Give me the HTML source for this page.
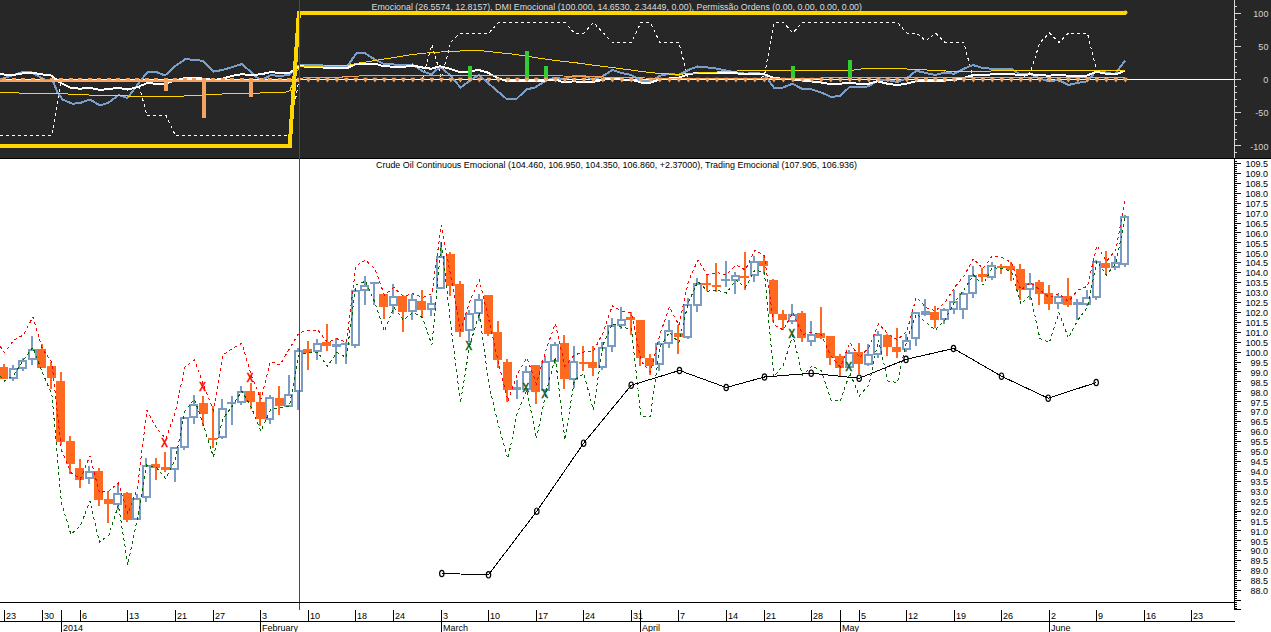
<!DOCTYPE html>
<html><head><meta charset="utf-8"><title>Chart</title>
<style>html,body{margin:0;padding:0;background:#fff;overflow:hidden}svg{display:block}text{font-family:"Liberation Sans",sans-serif}</style></head><body>
<svg width="1271" height="632" viewBox="0 0 1271 632" shape-rendering="crispEdges">
<rect x="0" y="0" width="1271" height="632" fill="#fff"/>
<rect x="0" y="0" width="1271" height="158" fill="#272727"/>
<rect x="0" y="158" width="1271" height="1" fill="#000"/>
<rect x="0" y="79" width="1234" height="1" fill="#fff"/>
<polyline fill="none" stroke="#fff" stroke-width="1" stroke-dasharray="3,3" points="0.00,135.50 4.40,135.50 13.90,135.50 23.40,135.50 32.90,135.50 42.40,135.50 51.90,135.50 61.40,79.50 70.90,79.50 80.40,79.50 89.90,79.50 99.40,79.50 108.90,79.50 118.40,79.50 127.90,79.50 137.40,79.50 146.90,115.00 156.40,115.00 165.90,115.00 175.40,135.50 184.90,135.50 194.40,135.50 203.90,135.50 213.40,135.50 222.90,135.50 232.40,135.50 241.90,135.50 251.40,135.50 260.90,135.50 270.40,135.50 279.90,135.50 289.40,135.50 298.90,79.50 308.40,79.50 317.90,79.50 327.40,79.50 336.90,79.50 346.40,79.50 355.90,79.50 365.40,79.50 374.90,79.50 384.40,79.50 393.90,79.50 403.40,79.50 412.90,79.50 422.40,79.50 431.90,44.50 441.40,78.00 450.90,42.00 460.40,33.00 469.90,33.00 479.40,33.00 488.90,33.00 498.40,22.50 507.90,22.50 517.40,22.50 526.90,22.50 536.40,22.50 545.90,22.50 555.40,22.50 564.90,22.50 574.40,33.00 583.90,33.00 593.40,22.50 602.90,32.50 612.40,42.50 621.90,42.50 631.40,42.50 640.90,22.50 650.40,22.50 659.90,42.50 669.40,42.50 678.90,42.50 688.40,79.50 697.90,79.50 707.40,79.50 716.90,79.50 726.40,79.50 735.90,79.50 745.40,79.50 754.90,79.50 764.40,76.00 773.90,22.50 783.40,22.50 792.90,33.00 802.40,22.50 811.90,22.50 821.40,22.50 830.90,22.50 840.40,22.50 849.90,22.50 859.40,22.50 868.90,22.50 878.40,22.50 887.90,22.50 897.40,22.50 906.90,33.00 916.40,33.00 925.90,41.00 935.40,33.00 944.90,42.50 954.40,42.50 963.90,42.50 973.40,79.50 982.90,79.50 992.40,79.50 1001.90,79.50 1011.40,79.50 1020.90,79.50 1030.40,72.00 1039.90,42.50 1049.40,33.00 1058.90,42.50 1068.40,33.00 1077.90,33.00 1087.40,33.00 1096.90,72.00 1106.40,73.50 1115.90,74.50 1125.40,71.50"/>
<polyline fill="none" stroke="#7A9FCC" stroke-width="2" points="0.00,79.50 10.00,76.25 22.50,72.00 31.25,72.50 40.00,77.00 46.25,80.00 52.50,80.00 57.50,92.50 62.50,99.50 72.50,103.75 80.00,103.00 90.00,99.50 100.00,105.50 108.75,102.50 118.75,95.00 127.50,98.00 136.25,86.25 147.50,72.00 156.25,72.00 165.00,75.50 175.00,66.25 185.50,59.00 193.75,60.00 203.00,60.75 213.75,71.50 222.50,70.00 232.50,67.00 242.00,64.00 250.00,71.25 257.50,78.00 262.50,79.50 271.25,75.00 280.00,76.25 290.00,74.50 296.25,66.25 299.50,65.50 306.25,65.00 347.50,66.25 356.25,53.25 365.00,53.25 375.00,59.50 383.75,63.75 393.75,64.50 402.50,65.50 412.50,64.50 422.50,71.25 431.25,74.25 440.00,67.00 450.00,75.00 460.50,87.50 470.00,80.50 478.75,75.00 487.50,82.50 497.50,91.25 507.00,99.25 516.25,99.25 526.25,89.50 535.00,87.50 545.00,81.25 555.00,77.50 563.75,79.50 573.75,75.75 583.75,75.75 592.50,79.50 602.50,76.25 612.50,70.00 621.25,73.00 631.25,75.00 641.25,81.25 650.50,81.25 660.00,75.75 669.25,73.75 678.75,75.00 688.25,70.00 697.50,66.50 707.50,67.50 717.50,68.75 727.50,70.75 736.25,72.50 746.25,73.75 755.00,72.50 764.50,74.50 773.75,87.50 783.00,87.50 792.50,83.75 802.00,88.75 811.25,89.25 821.25,92.50 830.75,96.75 840.00,96.25 849.50,87.00 858.75,87.50 868.75,86.25 877.50,80.50 887.50,80.00 897.00,82.00 906.25,78.75 916.25,70.75 925.75,73.00 935.00,75.00 944.50,72.50 954.25,73.75 963.75,68.75 973.00,65.00 982.50,68.00 992.50,68.75 1001.75,69.25 1011.25,68.75 1020.00,74.50 1030.00,73.75 1040.00,78.75 1049.25,81.25 1058.75,80.00 1068.25,85.00 1077.50,83.00 1087.00,81.25 1096.50,70.75 1106.25,72.50 1115.00,74.25 1125.00,60.75"/>
<polyline fill="none" stroke="#fff" stroke-width="2" points="0.00,73.75 10.00,75.50 20.00,73.75 31.25,72.50 41.25,74.25 51.25,75.50 60.00,82.50 70.00,87.50 80.00,88.75 88.75,87.50 100.00,90.00 110.00,88.75 118.75,88.00 127.50,89.50 136.25,87.50 147.50,83.00 156.25,83.75 165.00,83.75 175.00,80.50 185.00,78.00 195.00,77.50 203.75,78.75 213.75,80.00 222.50,78.75 232.50,75.75 242.00,74.25 251.25,75.00 261.25,74.25 271.25,72.00 280.00,73.25 290.00,72.50 297.50,67.50 299.50,66.25 322.50,67.50 347.50,68.00 356.25,63.75 375.00,63.75 383.75,66.25 402.50,67.00 412.50,65.50 422.50,67.50 431.25,68.75 440.00,66.25 450.00,68.75 460.50,72.50 470.00,71.25 478.75,70.00 487.50,72.50 497.50,78.00 507.00,81.25 526.25,81.25 545.00,80.50 555.00,79.50 563.75,82.50 573.75,81.25 583.75,82.50 592.50,82.00 602.50,80.00 612.50,78.00 621.25,79.50 631.25,79.50 641.25,82.50 650.50,82.50 660.00,79.50 678.75,77.50 688.25,74.50 697.50,72.50 717.50,72.50 736.25,73.25 746.25,74.50 755.00,74.25 764.50,74.25 773.75,78.00 792.50,79.50 802.00,80.50 821.25,82.50 830.75,84.25 849.50,83.00 858.75,83.75 868.75,83.75 877.50,81.25 887.50,83.75 897.00,85.00 906.25,83.75 916.25,81.25 935.00,81.25 954.25,80.00 963.75,78.00 973.00,75.00 982.50,75.50 992.50,74.25 1001.75,73.75 1011.25,73.75 1020.00,75.50 1030.00,74.25 1040.00,75.00 1049.25,75.75 1058.75,74.50 1068.25,75.75 1077.50,76.25 1087.00,75.50 1096.50,71.75 1106.25,73.75 1115.00,74.50 1124.00,71.25"/>
<polyline fill="none" stroke="#FFD700" stroke-width="1" points="0.00,92.50 37.50,93.50 57.50,93.50 77.50,94.50 100.00,95.50 118.75,95.50 137.50,96.50 156.25,96.50 175.00,96.50 193.75,95.50 212.50,94.50 231.25,93.50 250.00,93.50 270.00,92.50 285.00,92.50 290.00,90.50 296.25,72.50 300.00,66.50 347.50,65.50 356.25,63.50 375.00,60.50 393.75,57.50 412.50,54.50 431.25,52.50 450.00,51.50 470.00,50.50 480.00,50.50 497.50,52.50 516.25,54.50 535.00,57.50 555.00,60.50 573.75,62.50 596.00,65.50 612.50,67.50 641.25,71.50 660.00,73.50 678.75,74.50 688.25,73.50 707.50,72.50 727.50,71.50 746.25,70.50 765.00,70.50 792.50,70.50 830.00,70.50 850.00,70.50 865.00,68.50 896.00,68.50 917.50,69.50 955.00,71.50 990.00,71.50 992.50,70.50 1125.00,70.50"/>
<rect x="0" y="80" width="299" height="2" fill="#F4A460"/>
<polyline fill="none" stroke="#F4A460" stroke-width="1" points="299.50,79.50 304.00,77.50 342.00,77.50 343.00,76.50 375.00,75.50 530.00,75.50 596.00,76.50 610.00,77.50 680.00,78.50 820.00,78.50 822.50,77.50 1125.00,77.50"/>
<rect x="164.0" y="80" width="4" height="11.0" fill="#F4A460"/>
<rect x="202.0" y="80" width="4" height="38.0" fill="#F4A460"/>
<rect x="249.0" y="80" width="4" height="17.0" fill="#F4A460"/>
<rect x="468.0" y="66.0" width="4" height="14.0" fill="#32CD32"/>
<rect x="525.0" y="51.0" width="4" height="29.0" fill="#32CD32"/>
<rect x="544.0" y="66.0" width="4" height="14.0" fill="#32CD32"/>
<rect x="791.0" y="65.5" width="4" height="14.5" fill="#32CD32"/>
<rect x="848.0" y="59.5" width="4" height="20.5" fill="#32CD32"/>
<rect x="2" y="78" width="4" height="3" fill="#F4A460"/>
<rect x="12" y="78" width="4" height="3" fill="#F4A460"/>
<rect x="21" y="78" width="4" height="3" fill="#F4A460"/>
<rect x="31" y="78" width="4" height="3" fill="#F4A460"/>
<rect x="40" y="78" width="4" height="3" fill="#F4A460"/>
<rect x="50" y="78" width="4" height="3" fill="#F4A460"/>
<rect x="59" y="78" width="4" height="3" fill="#F4A460"/>
<rect x="69" y="78" width="4" height="3" fill="#F4A460"/>
<rect x="78" y="78" width="4" height="3" fill="#F4A460"/>
<rect x="88" y="78" width="4" height="3" fill="#F4A460"/>
<rect x="97" y="78" width="4" height="3" fill="#F4A460"/>
<rect x="107" y="78" width="4" height="3" fill="#F4A460"/>
<rect x="116" y="78" width="4" height="3" fill="#F4A460"/>
<rect x="126" y="78" width="4" height="3" fill="#F4A460"/>
<rect x="135" y="78" width="4" height="3" fill="#F4A460"/>
<rect x="145" y="78" width="4" height="3" fill="#F4A460"/>
<rect x="154" y="78" width="4" height="3" fill="#F4A460"/>
<rect x="164" y="78" width="4" height="3" fill="#F4A460"/>
<rect x="173" y="78" width="4" height="3" fill="#F4A460"/>
<rect x="183" y="78" width="4" height="3" fill="#F4A460"/>
<rect x="192" y="78" width="4" height="3" fill="#F4A460"/>
<rect x="202" y="78" width="4" height="3" fill="#F4A460"/>
<rect x="211" y="78" width="4" height="3" fill="#F4A460"/>
<rect x="221" y="78" width="4" height="3" fill="#F4A460"/>
<rect x="230" y="78" width="4" height="3" fill="#F4A460"/>
<rect x="240" y="78" width="4" height="3" fill="#F4A460"/>
<rect x="249" y="78" width="4" height="3" fill="#F4A460"/>
<rect x="259" y="78" width="4" height="3" fill="#F4A460"/>
<rect x="268" y="78" width="4" height="3" fill="#F4A460"/>
<rect x="278" y="78" width="4" height="3" fill="#F4A460"/>
<rect x="287" y="78" width="4" height="3" fill="#F4A460"/>
<polygon points="296.8,77.8 301.0,77.8 300.6,80 298.9,82.6 297.2,80" fill="#F4A460" shape-rendering="auto"/>
<polygon points="306.3,77.8 310.5,77.8 310.1,80 308.4,82.6 306.7,80" fill="#F4A460" shape-rendering="auto"/>
<polygon points="315.8,77.8 320.0,77.8 319.6,80 317.9,82.6 316.2,80" fill="#F4A460" shape-rendering="auto"/>
<polygon points="325.3,77.8 329.5,77.8 329.1,80 327.4,82.6 325.7,80" fill="#F4A460" shape-rendering="auto"/>
<polygon points="334.8,77.8 339.0,77.8 338.6,80 336.9,82.6 335.2,80" fill="#F4A460" shape-rendering="auto"/>
<polygon points="344.3,77.8 348.5,77.8 348.1,80 346.4,82.6 344.7,80" fill="#F4A460" shape-rendering="auto"/>
<polygon points="353.8,77.8 358.0,77.8 357.6,80 355.9,82.6 354.2,80" fill="#F4A460" shape-rendering="auto"/>
<polygon points="363.3,77.8 367.5,77.8 367.1,80 365.4,82.6 363.7,80" fill="#F4A460" shape-rendering="auto"/>
<polygon points="372.8,77.8 377.0,77.8 376.6,80 374.9,82.6 373.2,80" fill="#F4A460" shape-rendering="auto"/>
<polygon points="382.3,77.8 386.5,77.8 386.1,80 384.4,82.6 382.7,80" fill="#F4A460" shape-rendering="auto"/>
<polygon points="391.8,77.8 396.0,77.8 395.6,80 393.9,82.6 392.2,80" fill="#F4A460" shape-rendering="auto"/>
<polygon points="401.3,77.8 405.5,77.8 405.1,80 403.4,82.6 401.7,80" fill="#F4A460" shape-rendering="auto"/>
<polygon points="410.8,77.8 415.0,77.8 414.6,80 412.9,82.6 411.2,80" fill="#F4A460" shape-rendering="auto"/>
<polygon points="420.3,77.8 424.5,77.8 424.1,80 422.4,82.6 420.7,80" fill="#F4A460" shape-rendering="auto"/>
<polygon points="429.8,77.8 434.0,77.8 433.6,80 431.9,82.6 430.2,80" fill="#F4A460" shape-rendering="auto"/>
<polygon points="439.3,77.8 443.5,77.8 443.1,80 441.4,82.6 439.7,80" fill="#F4A460" shape-rendering="auto"/>
<polygon points="448.8,77.8 453.0,77.8 452.6,80 450.9,82.6 449.2,80" fill="#F4A460" shape-rendering="auto"/>
<polygon points="458.3,77.8 462.5,77.8 462.1,80 460.4,82.6 458.7,80" fill="#F4A460" shape-rendering="auto"/>
<polygon points="467.8,77.8 472.0,77.8 471.6,80 469.9,82.6 468.2,80" fill="#F4A460" shape-rendering="auto"/>
<polygon points="477.3,77.8 481.5,77.8 481.1,80 479.4,82.6 477.7,80" fill="#F4A460" shape-rendering="auto"/>
<polygon points="486.8,77.8 491.0,77.8 490.6,80 488.9,82.6 487.2,80" fill="#F4A460" shape-rendering="auto"/>
<polygon points="496.3,77.8 500.5,77.8 500.1,80 498.4,82.6 496.7,80" fill="#F4A460" shape-rendering="auto"/>
<polygon points="505.8,77.8 510.0,77.8 509.6,80 507.9,82.6 506.2,80" fill="#F4A460" shape-rendering="auto"/>
<polygon points="515.3,77.8 519.5,77.8 519.1,80 517.4,82.6 515.7,80" fill="#F4A460" shape-rendering="auto"/>
<polygon points="524.8,77.8 529.0,77.8 528.6,80 526.9,82.6 525.2,80" fill="#F4A460" shape-rendering="auto"/>
<polygon points="534.3,77.8 538.5,77.8 538.1,80 536.4,82.6 534.7,80" fill="#F4A460" shape-rendering="auto"/>
<polygon points="543.8,77.8 548.0,77.8 547.6,80 545.9,82.6 544.2,80" fill="#F4A460" shape-rendering="auto"/>
<polygon points="553.3,77.8 557.5,77.8 557.1,80 555.4,82.6 553.7,80" fill="#F4A460" shape-rendering="auto"/>
<polygon points="562.8,77.8 567.0,77.8 566.6,80 564.9,82.6 563.2,80" fill="#F4A460" shape-rendering="auto"/>
<polygon points="572.3,77.8 576.5,77.8 576.1,80 574.4,82.6 572.7,80" fill="#F4A460" shape-rendering="auto"/>
<polygon points="581.8,77.8 586.0,77.8 585.6,80 583.9,82.6 582.2,80" fill="#F4A460" shape-rendering="auto"/>
<polygon points="591.3,77.8 595.5,77.8 595.1,80 593.4,82.6 591.7,80" fill="#F4A460" shape-rendering="auto"/>
<polygon points="600.8,77.8 605.0,77.8 604.6,80 602.9,82.6 601.2,80" fill="#F4A460" shape-rendering="auto"/>
<polygon points="610.3,77.8 614.5,77.8 614.1,80 612.4,82.6 610.7,80" fill="#F4A460" shape-rendering="auto"/>
<polygon points="619.8,77.8 624.0,77.8 623.6,80 621.9,82.6 620.2,80" fill="#F4A460" shape-rendering="auto"/>
<polygon points="629.3,77.8 633.5,77.8 633.1,80 631.4,82.6 629.7,80" fill="#F4A460" shape-rendering="auto"/>
<polygon points="638.8,77.8 643.0,77.8 642.6,80 640.9,82.6 639.2,80" fill="#F4A460" shape-rendering="auto"/>
<polygon points="648.3,77.8 652.5,77.8 652.1,80 650.4,82.6 648.7,80" fill="#F4A460" shape-rendering="auto"/>
<polygon points="657.8,77.8 662.0,77.8 661.6,80 659.9,82.6 658.2,80" fill="#F4A460" shape-rendering="auto"/>
<polygon points="667.3,77.8 671.5,77.8 671.1,80 669.4,82.6 667.7,80" fill="#F4A460" shape-rendering="auto"/>
<polygon points="676.8,77.8 681.0,77.8 680.6,80 678.9,82.6 677.2,80" fill="#F4A460" shape-rendering="auto"/>
<polygon points="686.3,77.8 690.5,77.8 690.1,80 688.4,82.6 686.7,80" fill="#F4A460" shape-rendering="auto"/>
<polygon points="695.8,77.8 700.0,77.8 699.6,80 697.9,82.6 696.2,80" fill="#F4A460" shape-rendering="auto"/>
<polygon points="705.3,77.8 709.5,77.8 709.1,80 707.4,82.6 705.7,80" fill="#F4A460" shape-rendering="auto"/>
<polygon points="714.8,77.8 719.0,77.8 718.6,80 716.9,82.6 715.2,80" fill="#F4A460" shape-rendering="auto"/>
<polygon points="724.3,77.8 728.5,77.8 728.1,80 726.4,82.6 724.7,80" fill="#F4A460" shape-rendering="auto"/>
<polygon points="733.8,77.8 738.0,77.8 737.6,80 735.9,82.6 734.2,80" fill="#F4A460" shape-rendering="auto"/>
<polygon points="743.3,77.8 747.5,77.8 747.1,80 745.4,82.6 743.7,80" fill="#F4A460" shape-rendering="auto"/>
<polygon points="752.8,77.8 757.0,77.8 756.6,80 754.9,82.6 753.2,80" fill="#F4A460" shape-rendering="auto"/>
<polygon points="762.3,77.8 766.5,77.8 766.1,80 764.4,82.6 762.7,80" fill="#F4A460" shape-rendering="auto"/>
<polygon points="771.8,77.8 776.0,77.8 775.6,80 773.9,82.6 772.2,80" fill="#F4A460" shape-rendering="auto"/>
<polygon points="781.3,77.8 785.5,77.8 785.1,80 783.4,82.6 781.7,80" fill="#F4A460" shape-rendering="auto"/>
<polygon points="790.8,77.8 795.0,77.8 794.6,80 792.9,82.6 791.2,80" fill="#F4A460" shape-rendering="auto"/>
<polygon points="800.3,77.8 804.5,77.8 804.1,80 802.4,82.6 800.7,80" fill="#F4A460" shape-rendering="auto"/>
<polygon points="809.8,77.8 814.0,77.8 813.6,80 811.9,82.6 810.2,80" fill="#F4A460" shape-rendering="auto"/>
<polygon points="819.3,77.8 823.5,77.8 823.1,80 821.4,82.6 819.7,80" fill="#F4A460" shape-rendering="auto"/>
<polygon points="828.8,77.8 833.0,77.8 832.6,80 830.9,82.6 829.2,80" fill="#F4A460" shape-rendering="auto"/>
<polygon points="838.3,77.8 842.5,77.8 842.1,80 840.4,82.6 838.7,80" fill="#F4A460" shape-rendering="auto"/>
<polygon points="847.8,77.8 852.0,77.8 851.6,80 849.9,82.6 848.2,80" fill="#F4A460" shape-rendering="auto"/>
<polygon points="857.3,77.8 861.5,77.8 861.1,80 859.4,82.6 857.7,80" fill="#F4A460" shape-rendering="auto"/>
<polygon points="866.8,77.8 871.0,77.8 870.6,80 868.9,82.6 867.2,80" fill="#F4A460" shape-rendering="auto"/>
<polygon points="876.3,77.8 880.5,77.8 880.1,80 878.4,82.6 876.7,80" fill="#F4A460" shape-rendering="auto"/>
<polygon points="885.8,77.8 890.0,77.8 889.6,80 887.9,82.6 886.2,80" fill="#F4A460" shape-rendering="auto"/>
<polygon points="895.3,77.8 899.5,77.8 899.1,80 897.4,82.6 895.7,80" fill="#F4A460" shape-rendering="auto"/>
<polygon points="904.8,77.8 909.0,77.8 908.6,80 906.9,82.6 905.2,80" fill="#F4A460" shape-rendering="auto"/>
<polygon points="914.3,77.8 918.5,77.8 918.1,80 916.4,82.6 914.7,80" fill="#F4A460" shape-rendering="auto"/>
<polygon points="923.8,77.8 928.0,77.8 927.6,80 925.9,82.6 924.2,80" fill="#F4A460" shape-rendering="auto"/>
<polygon points="933.3,77.8 937.5,77.8 937.1,80 935.4,82.6 933.7,80" fill="#F4A460" shape-rendering="auto"/>
<polygon points="942.8,77.8 947.0,77.8 946.6,80 944.9,82.6 943.2,80" fill="#F4A460" shape-rendering="auto"/>
<polygon points="952.3,77.8 956.5,77.8 956.1,80 954.4,82.6 952.7,80" fill="#F4A460" shape-rendering="auto"/>
<polygon points="961.8,77.8 966.0,77.8 965.6,80 963.9,82.6 962.2,80" fill="#F4A460" shape-rendering="auto"/>
<polygon points="971.3,77.8 975.5,77.8 975.1,80 973.4,82.6 971.7,80" fill="#F4A460" shape-rendering="auto"/>
<polygon points="980.8,77.8 985.0,77.8 984.6,80 982.9,82.6 981.2,80" fill="#F4A460" shape-rendering="auto"/>
<polygon points="990.3,77.8 994.5,77.8 994.1,80 992.4,82.6 990.7,80" fill="#F4A460" shape-rendering="auto"/>
<polygon points="999.8,77.8 1004.0,77.8 1003.6,80 1001.9,82.6 1000.2,80" fill="#F4A460" shape-rendering="auto"/>
<polygon points="1009.3,77.8 1013.5,77.8 1013.1,80 1011.4,82.6 1009.7,80" fill="#F4A460" shape-rendering="auto"/>
<polygon points="1018.8,77.8 1023.0,77.8 1022.6,80 1020.9,82.6 1019.2,80" fill="#F4A460" shape-rendering="auto"/>
<polygon points="1028.3,77.8 1032.5,77.8 1032.1,80 1030.4,82.6 1028.7,80" fill="#F4A460" shape-rendering="auto"/>
<polygon points="1037.8,77.8 1042.0,77.8 1041.6,80 1039.9,82.6 1038.2,80" fill="#F4A460" shape-rendering="auto"/>
<polygon points="1047.3,77.8 1051.5,77.8 1051.1,80 1049.4,82.6 1047.7,80" fill="#F4A460" shape-rendering="auto"/>
<polygon points="1056.8,77.8 1061.0,77.8 1060.6,80 1058.9,82.6 1057.2,80" fill="#F4A460" shape-rendering="auto"/>
<polygon points="1066.3,77.8 1070.5,77.8 1070.1,80 1068.4,82.6 1066.7,80" fill="#F4A460" shape-rendering="auto"/>
<polygon points="1075.8,77.8 1080.0,77.8 1079.6,80 1077.9,82.6 1076.2,80" fill="#F4A460" shape-rendering="auto"/>
<polygon points="1085.3,77.8 1089.5,77.8 1089.1,80 1087.4,82.6 1085.7,80" fill="#F4A460" shape-rendering="auto"/>
<polygon points="1094.8,77.8 1099.0,77.8 1098.6,80 1096.9,82.6 1095.2,80" fill="#F4A460" shape-rendering="auto"/>
<polygon points="1104.3,77.8 1108.5,77.8 1108.1,80 1106.4,82.6 1104.7,80" fill="#F4A460" shape-rendering="auto"/>
<polygon points="1113.8,77.8 1118.0,77.8 1117.6,80 1115.9,82.6 1114.2,80" fill="#F4A460" shape-rendering="auto"/>
<polygon points="1123.3,77.8 1127.5,77.8 1127.1,80 1125.4,82.6 1123.7,80" fill="#F4A460" shape-rendering="auto"/>
<polyline fill="none" stroke="#FFD700" stroke-width="4" stroke-linejoin="miter" points="0.00,145.50 289.70,145.50 298.90,12.50 1125.50,12.50"/>
<circle cx="1125.5" cy="12.5" r="2" fill="#FFD700" shape-rendering="auto"/>
<rect x="1234" y="0" width="1" height="158" fill="#d8d8d8"/>
<rect x="1235" y="152" width="2" height="1" fill="#d8d8d8"/>
<rect x="1235" y="145" width="6" height="1" fill="#d8d8d8"/>
<rect x="1235" y="139" width="2" height="1" fill="#d8d8d8"/>
<rect x="1235" y="132" width="2" height="1" fill="#d8d8d8"/>
<rect x="1235" y="125" width="2" height="1" fill="#d8d8d8"/>
<rect x="1235" y="119" width="2" height="1" fill="#d8d8d8"/>
<rect x="1235" y="112" width="6" height="1" fill="#d8d8d8"/>
<rect x="1235" y="106" width="2" height="1" fill="#d8d8d8"/>
<rect x="1235" y="99" width="2" height="1" fill="#d8d8d8"/>
<rect x="1235" y="92" width="2" height="1" fill="#d8d8d8"/>
<rect x="1235" y="86" width="2" height="1" fill="#d8d8d8"/>
<rect x="1235" y="79" width="6" height="1" fill="#d8d8d8"/>
<rect x="1235" y="72" width="2" height="1" fill="#d8d8d8"/>
<rect x="1235" y="66" width="2" height="1" fill="#d8d8d8"/>
<rect x="1235" y="59" width="2" height="1" fill="#d8d8d8"/>
<rect x="1235" y="52" width="2" height="1" fill="#d8d8d8"/>
<rect x="1235" y="46" width="6" height="1" fill="#d8d8d8"/>
<rect x="1235" y="39" width="2" height="1" fill="#d8d8d8"/>
<rect x="1235" y="33" width="2" height="1" fill="#d8d8d8"/>
<rect x="1235" y="26" width="2" height="1" fill="#d8d8d8"/>
<rect x="1235" y="19" width="2" height="1" fill="#d8d8d8"/>
<rect x="1235" y="13" width="6" height="1" fill="#d8d8d8"/>
<rect x="1235" y="6" width="2" height="1" fill="#d8d8d8"/>
<text transform="translate(1268.4,16.8) scale(0.93,1)" font-size="9.7" fill="#d4d4d4" text-anchor="end">100</text>
<text transform="translate(1268.4,50.0) scale(0.93,1)" font-size="9.7" fill="#d4d4d4" text-anchor="end">50</text>
<text transform="translate(1268.4,83.2) scale(0.93,1)" font-size="9.7" fill="#d4d4d4" text-anchor="end">0</text>
<text transform="translate(1268.4,116.4) scale(0.93,1)" font-size="9.7" fill="#d4d4d4" text-anchor="end">-50</text>
<text transform="translate(1268.4,149.6) scale(0.93,1)" font-size="9.7" fill="#d4d4d4" text-anchor="end">-100</text>
<text x="371.5" y="9.5" font-size="9.7" fill="#dcdcdc" textLength="490.5" lengthAdjust="spacingAndGlyphs">Emocional (26.5574, 12.8157), DMI Emocional (100.000, 14.6530, 2.34449, 0.00), Permissão Ordens (0.00, 0.00, 0.00, 0.00)</text>
<text x="376" y="168" font-size="9.7" fill="#000" textLength="481" lengthAdjust="spacingAndGlyphs">Crude Oil Continuous Emocional (104.460, 106.950, 104.350, 106.860, +2.37000), Trading Emocional (107.905, 106.936)</text>
<rect x="3" y="364.0" width="2" height="15.0" fill="#FF6A20"/>
<rect x="-1" y="367" width="9" height="12" fill="#FF6A20"/>
<rect x="12" y="365.0" width="2" height="3.0" fill="#7B9BC3"/>
<rect x="12" y="379.0" width="2" height="2.0" fill="#7B9BC3"/>
<rect x="10" y="369" width="7" height="9" fill="none" stroke="#7B9BC3" stroke-width="2"/>
<rect x="22" y="358.0" width="2" height="2.0" fill="#7B9BC3"/>
<rect x="22" y="369.0" width="2" height="2.0" fill="#7B9BC3"/>
<rect x="19" y="361" width="7" height="7" fill="none" stroke="#7B9BC3" stroke-width="2"/>
<rect x="31" y="336.0" width="2" height="13.0" fill="#7B9BC3"/>
<rect x="31" y="360.0" width="2" height="5.0" fill="#7B9BC3"/>
<rect x="29" y="350" width="7" height="9" fill="none" stroke="#7B9BC3" stroke-width="2"/>
<rect x="41" y="344.0" width="2" height="24.0" fill="#FF6A20"/>
<rect x="37" y="349" width="9" height="19" fill="#FF6A20"/>
<rect x="50" y="362.0" width="2" height="27.0" fill="#FF6A20"/>
<rect x="47" y="366" width="9" height="12" fill="#FF6A20"/>
<rect x="60" y="372.0" width="2" height="73.0" fill="#FF6A20"/>
<rect x="56" y="381" width="9" height="61" fill="#FF6A20"/>
<rect x="69" y="436.0" width="2" height="38.0" fill="#FF6A20"/>
<rect x="66" y="441" width="9" height="23" fill="#FF6A20"/>
<rect x="79" y="459.0" width="2" height="29.0" fill="#FF6A20"/>
<rect x="75" y="468" width="9" height="12" fill="#FF6A20"/>
<rect x="88" y="466.0" width="2" height="5.0" fill="#7B9BC3"/>
<rect x="88" y="479.0" width="2" height="5.0" fill="#7B9BC3"/>
<rect x="86" y="472" width="7" height="6" fill="none" stroke="#7B9BC3" stroke-width="2"/>
<rect x="98" y="468.0" width="2" height="38.0" fill="#FF6A20"/>
<rect x="94" y="471" width="9" height="29" fill="#FF6A20"/>
<rect x="107" y="491.0" width="2" height="32.0" fill="#FF6A20"/>
<rect x="104" y="499" width="9" height="5" fill="#FF6A20"/>
<rect x="117" y="484.0" width="2" height="9.0" fill="#7B9BC3"/>
<rect x="117" y="505.0" width="2" height="5.0" fill="#7B9BC3"/>
<rect x="114" y="494" width="7" height="10" fill="none" stroke="#7B9BC3" stroke-width="2"/>
<rect x="126" y="492.0" width="2" height="30.0" fill="#FF6A20"/>
<rect x="123" y="493" width="9" height="27" fill="#FF6A20"/>
<rect x="136" y="494.0" width="2" height="4.0" fill="#7B9BC3"/>
<rect x="136" y="520.0" width="2" height="0.0" fill="#7B9BC3"/>
<rect x="133" y="499" width="7" height="20" fill="none" stroke="#7B9BC3" stroke-width="2"/>
<rect x="145" y="458.0" width="2" height="7.0" fill="#7B9BC3"/>
<rect x="145" y="498.0" width="2" height="4.0" fill="#7B9BC3"/>
<rect x="143" y="466" width="7" height="31" fill="none" stroke="#7B9BC3" stroke-width="2"/>
<rect x="155" y="458.0" width="2" height="22.0" fill="#FF6A20"/>
<rect x="151" y="464" width="9" height="4" fill="#FF6A20"/>
<rect x="164" y="452.0" width="2" height="20.0" fill="#FF6A20"/>
<rect x="161" y="467" width="9" height="3" fill="#FF6A20"/>
<rect x="174" y="447.0" width="2" height="1.0" fill="#7B9BC3"/>
<rect x="174" y="470.0" width="2" height="12.0" fill="#7B9BC3"/>
<rect x="171" y="448" width="7" height="21" fill="none" stroke="#7B9BC3" stroke-width="2"/>
<rect x="183" y="417.0" width="2" height="1.0" fill="#7B9BC3"/>
<rect x="183" y="448.0" width="2" height="2.0" fill="#7B9BC3"/>
<rect x="181" y="418" width="7" height="29" fill="none" stroke="#7B9BC3" stroke-width="2"/>
<rect x="193" y="395.0" width="2" height="9.0" fill="#7B9BC3"/>
<rect x="193" y="418.0" width="2" height="6.0" fill="#7B9BC3"/>
<rect x="190" y="405" width="7" height="12" fill="none" stroke="#7B9BC3" stroke-width="2"/>
<rect x="202" y="396.0" width="2" height="30.0" fill="#FF6A20"/>
<rect x="199" y="403" width="9" height="11" fill="#FF6A20"/>
<rect x="212" y="406.0" width="2" height="42.0" fill="#FF6A20"/>
<rect x="208" y="438" width="9" height="2" fill="#FF6A20"/>
<rect x="221" y="399.0" width="2" height="9.0" fill="#7B9BC3"/>
<rect x="221" y="438.0" width="2" height="1.0" fill="#7B9BC3"/>
<rect x="219" y="409" width="7" height="28" fill="none" stroke="#7B9BC3" stroke-width="2"/>
<rect x="231" y="396.0" width="2" height="6.0" fill="#7B9BC3"/>
<rect x="231" y="404.0" width="2" height="21.0" fill="#7B9BC3"/>
<rect x="227" y="402" width="9" height="2" fill="#7B9BC3"/>
<rect x="240" y="386.0" width="2" height="5.0" fill="#7B9BC3"/>
<rect x="240" y="403.0" width="2" height="2.0" fill="#7B9BC3"/>
<rect x="238" y="392" width="7" height="10" fill="none" stroke="#7B9BC3" stroke-width="2"/>
<rect x="250" y="383.0" width="2" height="26.0" fill="#FF6A20"/>
<rect x="246" y="391" width="9" height="11" fill="#FF6A20"/>
<rect x="259" y="392.0" width="2" height="34.0" fill="#FF6A20"/>
<rect x="256" y="402" width="9" height="17" fill="#FF6A20"/>
<rect x="269" y="395.0" width="2" height="2.0" fill="#7B9BC3"/>
<rect x="269" y="420.0" width="2" height="4.0" fill="#7B9BC3"/>
<rect x="266" y="398" width="7" height="21" fill="none" stroke="#7B9BC3" stroke-width="2"/>
<rect x="278" y="386.0" width="2" height="29.0" fill="#FF6A20"/>
<rect x="275" y="398" width="9" height="8" fill="#FF6A20"/>
<rect x="288" y="375.0" width="2" height="19.0" fill="#7B9BC3"/>
<rect x="288" y="407.0" width="2" height="0.0" fill="#7B9BC3"/>
<rect x="285" y="395" width="7" height="11" fill="none" stroke="#7B9BC3" stroke-width="2"/>
<rect x="297" y="348.0" width="2" height="2.0" fill="#7B9BC3"/>
<rect x="297" y="392.0" width="2" height="18.0" fill="#7B9BC3"/>
<rect x="295" y="351" width="7" height="40" fill="none" stroke="#7B9BC3" stroke-width="2"/>
<rect x="307" y="341.0" width="2" height="29.0" fill="#FF6A20"/>
<rect x="303" y="349" width="9" height="4" fill="#FF6A20"/>
<rect x="316" y="339.0" width="2" height="4.0" fill="#7B9BC3"/>
<rect x="316" y="352.0" width="2" height="8.0" fill="#7B9BC3"/>
<rect x="314" y="344" width="7" height="7" fill="none" stroke="#7B9BC3" stroke-width="2"/>
<rect x="326" y="324.0" width="2" height="27.0" fill="#FF6A20"/>
<rect x="322" y="342" width="9" height="4" fill="#FF6A20"/>
<rect x="335" y="338.0" width="2" height="6.0" fill="#7B9BC3"/>
<rect x="335" y="347.0" width="2" height="17.0" fill="#7B9BC3"/>
<rect x="332" y="344" width="9" height="3" fill="#7B9BC3"/>
<rect x="345" y="342.0" width="2" height="1.0" fill="#7B9BC3"/>
<rect x="345" y="345.0" width="2" height="19.0" fill="#7B9BC3"/>
<rect x="341" y="343" width="9" height="2" fill="#7B9BC3"/>
<rect x="354" y="289.0" width="2" height="1.0" fill="#7B9BC3"/>
<rect x="354" y="346.0" width="2" height="2.0" fill="#7B9BC3"/>
<rect x="352" y="291" width="7" height="54" fill="none" stroke="#7B9BC3" stroke-width="2"/>
<rect x="364" y="276.0" width="2" height="9.0" fill="#7B9BC3"/>
<rect x="364" y="291.0" width="2" height="14.0" fill="#7B9BC3"/>
<rect x="361" y="286" width="7" height="4" fill="none" stroke="#7B9BC3" stroke-width="2"/>
<rect x="373" y="282.0" width="2" height="1.0" fill="#7B9BC3"/>
<rect x="373" y="284.0" width="2" height="21.0" fill="#7B9BC3"/>
<rect x="370" y="282" width="9" height="2" fill="#7B9BC3"/>
<rect x="383" y="294.0" width="2" height="25.0" fill="#FF6A20"/>
<rect x="379" y="294" width="9" height="13" fill="#FF6A20"/>
<rect x="392" y="284.0" width="2" height="12.0" fill="#7B9BC3"/>
<rect x="392" y="306.0" width="2" height="8.0" fill="#7B9BC3"/>
<rect x="390" y="297" width="7" height="8" fill="none" stroke="#7B9BC3" stroke-width="2"/>
<rect x="402" y="295.0" width="2" height="37.0" fill="#FF6A20"/>
<rect x="398" y="296" width="9" height="16" fill="#FF6A20"/>
<rect x="411" y="294.0" width="2" height="5.0" fill="#7B9BC3"/>
<rect x="411" y="312.0" width="2" height="8.0" fill="#7B9BC3"/>
<rect x="409" y="300" width="7" height="11" fill="none" stroke="#7B9BC3" stroke-width="2"/>
<rect x="421" y="290.0" width="2" height="28.0" fill="#FF6A20"/>
<rect x="417" y="301" width="9" height="9" fill="#FF6A20"/>
<rect x="430" y="296.0" width="2" height="7.0" fill="#7B9BC3"/>
<rect x="430" y="310.0" width="2" height="6.0" fill="#7B9BC3"/>
<rect x="428" y="304" width="7" height="5" fill="none" stroke="#7B9BC3" stroke-width="2"/>
<rect x="440" y="242.0" width="2" height="14.0" fill="#7B9BC3"/>
<rect x="440" y="289.0" width="2" height="0.0" fill="#7B9BC3"/>
<rect x="437" y="257" width="7" height="31" fill="none" stroke="#7B9BC3" stroke-width="2"/>
<rect x="449" y="252.0" width="2" height="44.0" fill="#FF6A20"/>
<rect x="446" y="254" width="9" height="32" fill="#FF6A20"/>
<rect x="459" y="281.0" width="2" height="56.0" fill="#FF6A20"/>
<rect x="455" y="284" width="9" height="48" fill="#FF6A20"/>
<rect x="468" y="310.0" width="2" height="3.0" fill="#7B9BC3"/>
<rect x="468" y="331.0" width="2" height="11.0" fill="#7B9BC3"/>
<rect x="466" y="314" width="7" height="16" fill="none" stroke="#7B9BC3" stroke-width="2"/>
<rect x="478" y="294.0" width="2" height="5.0" fill="#7B9BC3"/>
<rect x="478" y="314.0" width="2" height="7.0" fill="#7B9BC3"/>
<rect x="475" y="300" width="7" height="13" fill="none" stroke="#7B9BC3" stroke-width="2"/>
<rect x="487" y="295.0" width="2" height="41.0" fill="#FF6A20"/>
<rect x="484" y="295" width="9" height="39" fill="#FF6A20"/>
<rect x="497" y="321.0" width="2" height="47.0" fill="#FF6A20"/>
<rect x="493" y="332" width="9" height="28" fill="#FF6A20"/>
<rect x="506" y="359.0" width="2" height="43.0" fill="#FF6A20"/>
<rect x="503" y="362" width="9" height="28" fill="#FF6A20"/>
<rect x="516" y="380.0" width="2" height="7.0" fill="#7B9BC3"/>
<rect x="516" y="390.0" width="2" height="9.0" fill="#7B9BC3"/>
<rect x="512" y="387" width="9" height="3" fill="#7B9BC3"/>
<rect x="525" y="366.0" width="2" height="5.0" fill="#7B9BC3"/>
<rect x="525" y="390.0" width="2" height="1.0" fill="#7B9BC3"/>
<rect x="523" y="372" width="7" height="17" fill="none" stroke="#7B9BC3" stroke-width="2"/>
<rect x="535" y="365.0" width="2" height="39.0" fill="#FF6A20"/>
<rect x="531" y="365" width="9" height="27" fill="#FF6A20"/>
<rect x="544" y="356.0" width="2" height="5.0" fill="#7B9BC3"/>
<rect x="544" y="391.0" width="2" height="1.0" fill="#7B9BC3"/>
<rect x="542" y="362" width="7" height="28" fill="none" stroke="#7B9BC3" stroke-width="2"/>
<rect x="554" y="342.0" width="2" height="2.0" fill="#7B9BC3"/>
<rect x="554" y="362.0" width="2" height="2.0" fill="#7B9BC3"/>
<rect x="551" y="345" width="7" height="16" fill="none" stroke="#7B9BC3" stroke-width="2"/>
<rect x="563" y="335.0" width="2" height="54.0" fill="#FF6A20"/>
<rect x="560" y="343" width="9" height="36" fill="#FF6A20"/>
<rect x="573" y="346.0" width="2" height="15.0" fill="#7B9BC3"/>
<rect x="573" y="380.0" width="2" height="8.0" fill="#7B9BC3"/>
<rect x="570" y="362" width="7" height="17" fill="none" stroke="#7B9BC3" stroke-width="2"/>
<rect x="582" y="346.0" width="2" height="25.0" fill="#FF6A20"/>
<rect x="579" y="362" width="9" height="2" fill="#FF6A20"/>
<rect x="592" y="346.0" width="2" height="30.0" fill="#FF6A20"/>
<rect x="588" y="362" width="9" height="6" fill="#FF6A20"/>
<rect x="601" y="342.0" width="2" height="5.0" fill="#7B9BC3"/>
<rect x="601" y="368.0" width="2" height="2.0" fill="#7B9BC3"/>
<rect x="599" y="348" width="7" height="19" fill="none" stroke="#7B9BC3" stroke-width="2"/>
<rect x="611" y="318.0" width="2" height="7.0" fill="#7B9BC3"/>
<rect x="611" y="347.0" width="2" height="5.0" fill="#7B9BC3"/>
<rect x="608" y="326" width="7" height="20" fill="none" stroke="#7B9BC3" stroke-width="2"/>
<rect x="620" y="307.0" width="2" height="12.0" fill="#7B9BC3"/>
<rect x="620" y="326.0" width="2" height="3.0" fill="#7B9BC3"/>
<rect x="618" y="320" width="7" height="5" fill="none" stroke="#7B9BC3" stroke-width="2"/>
<rect x="630" y="312.0" width="2" height="23.0" fill="#FF6A20"/>
<rect x="626" y="317" width="9" height="3" fill="#FF6A20"/>
<rect x="639" y="320.0" width="2" height="46.0" fill="#FF6A20"/>
<rect x="636" y="320" width="9" height="38" fill="#FF6A20"/>
<rect x="649" y="354.0" width="2" height="21.0" fill="#FF6A20"/>
<rect x="645" y="358" width="9" height="8" fill="#FF6A20"/>
<rect x="658" y="341.0" width="2" height="2.0" fill="#7B9BC3"/>
<rect x="658" y="365.0" width="2" height="6.0" fill="#7B9BC3"/>
<rect x="656" y="344" width="7" height="20" fill="none" stroke="#7B9BC3" stroke-width="2"/>
<rect x="668" y="320.0" width="2" height="10.0" fill="#7B9BC3"/>
<rect x="668" y="344.0" width="2" height="4.0" fill="#7B9BC3"/>
<rect x="665" y="331" width="7" height="12" fill="none" stroke="#7B9BC3" stroke-width="2"/>
<rect x="677" y="325.0" width="2" height="29.0" fill="#FF6A20"/>
<rect x="674" y="333" width="9" height="4" fill="#FF6A20"/>
<rect x="687" y="298.0" width="2" height="6.0" fill="#7B9BC3"/>
<rect x="687" y="338.0" width="2" height="1.0" fill="#7B9BC3"/>
<rect x="684" y="305" width="7" height="32" fill="none" stroke="#7B9BC3" stroke-width="2"/>
<rect x="696" y="278.0" width="2" height="5.0" fill="#7B9BC3"/>
<rect x="696" y="306.0" width="2" height="6.0" fill="#7B9BC3"/>
<rect x="694" y="284" width="7" height="21" fill="none" stroke="#7B9BC3" stroke-width="2"/>
<rect x="706" y="275.0" width="2" height="16.0" fill="#FF6A20"/>
<rect x="702" y="283" width="9" height="2" fill="#FF6A20"/>
<rect x="715" y="263.0" width="2" height="29.0" fill="#FF6A20"/>
<rect x="712" y="285" width="9" height="2" fill="#FF6A20"/>
<rect x="725" y="261.0" width="2" height="18.0" fill="#7B9BC3"/>
<rect x="725" y="281.0" width="2" height="6.0" fill="#7B9BC3"/>
<rect x="721" y="279" width="9" height="2" fill="#7B9BC3"/>
<rect x="734" y="272.0" width="2" height="3.0" fill="#7B9BC3"/>
<rect x="734" y="281.0" width="2" height="13.0" fill="#7B9BC3"/>
<rect x="732" y="276" width="7" height="4" fill="none" stroke="#7B9BC3" stroke-width="2"/>
<rect x="744" y="252.0" width="2" height="38.0" fill="#FF6A20"/>
<rect x="740" y="276" width="9" height="2" fill="#FF6A20"/>
<rect x="753" y="256.0" width="2" height="5.0" fill="#7B9BC3"/>
<rect x="753" y="276.0" width="2" height="6.0" fill="#7B9BC3"/>
<rect x="751" y="262" width="7" height="13" fill="none" stroke="#7B9BC3" stroke-width="2"/>
<rect x="763" y="256.0" width="2" height="18.0" fill="#FF6A20"/>
<rect x="759" y="261" width="9" height="5" fill="#FF6A20"/>
<rect x="772" y="279.0" width="2" height="43.0" fill="#FF6A20"/>
<rect x="769" y="280" width="9" height="34" fill="#FF6A20"/>
<rect x="782" y="310.0" width="2" height="20.0" fill="#FF6A20"/>
<rect x="778" y="314" width="9" height="6" fill="#FF6A20"/>
<rect x="791" y="304.0" width="2" height="10.0" fill="#7B9BC3"/>
<rect x="791" y="322.0" width="2" height="2.0" fill="#7B9BC3"/>
<rect x="789" y="315" width="7" height="6" fill="none" stroke="#7B9BC3" stroke-width="2"/>
<rect x="801" y="311.0" width="2" height="31.0" fill="#FF6A20"/>
<rect x="797" y="313" width="9" height="25" fill="#FF6A20"/>
<rect x="810" y="321.0" width="2" height="13.0" fill="#7B9BC3"/>
<rect x="810" y="342.0" width="2" height="4.0" fill="#7B9BC3"/>
<rect x="808" y="335" width="7" height="6" fill="none" stroke="#7B9BC3" stroke-width="2"/>
<rect x="820" y="307.0" width="2" height="32.0" fill="#FF6A20"/>
<rect x="816" y="333" width="9" height="5" fill="#FF6A20"/>
<rect x="829" y="336.0" width="2" height="29.0" fill="#FF6A20"/>
<rect x="826" y="336" width="9" height="22" fill="#FF6A20"/>
<rect x="839" y="354.0" width="2" height="23.0" fill="#FF6A20"/>
<rect x="835" y="356" width="9" height="12" fill="#FF6A20"/>
<rect x="848" y="350.0" width="2" height="2.0" fill="#7B9BC3"/>
<rect x="848" y="368.0" width="2" height="0.0" fill="#7B9BC3"/>
<rect x="846" y="353" width="7" height="14" fill="none" stroke="#7B9BC3" stroke-width="2"/>
<rect x="858" y="343.0" width="2" height="31.0" fill="#FF6A20"/>
<rect x="854" y="352" width="9" height="12" fill="#FF6A20"/>
<rect x="867" y="344.0" width="2" height="10.0" fill="#7B9BC3"/>
<rect x="867" y="365.0" width="2" height="1.0" fill="#7B9BC3"/>
<rect x="865" y="355" width="7" height="9" fill="none" stroke="#7B9BC3" stroke-width="2"/>
<rect x="877" y="331.0" width="2" height="3.0" fill="#7B9BC3"/>
<rect x="877" y="355.0" width="2" height="3.0" fill="#7B9BC3"/>
<rect x="874" y="335" width="7" height="19" fill="none" stroke="#7B9BC3" stroke-width="2"/>
<rect x="886" y="334.0" width="2" height="22.0" fill="#FF6A20"/>
<rect x="883" y="335" width="9" height="12" fill="#FF6A20"/>
<rect x="896" y="328.0" width="2" height="30.0" fill="#FF6A20"/>
<rect x="892" y="347" width="9" height="5" fill="#FF6A20"/>
<rect x="905" y="334.0" width="2" height="6.0" fill="#7B9BC3"/>
<rect x="905" y="350.0" width="2" height="2.0" fill="#7B9BC3"/>
<rect x="903" y="341" width="7" height="8" fill="none" stroke="#7B9BC3" stroke-width="2"/>
<rect x="915" y="312.0" width="2" height="1.0" fill="#7B9BC3"/>
<rect x="915" y="339.0" width="2" height="7.0" fill="#7B9BC3"/>
<rect x="912" y="313" width="7" height="25" fill="none" stroke="#7B9BC3" stroke-width="2"/>
<rect x="924" y="299.0" width="2" height="12.0" fill="#7B9BC3"/>
<rect x="924" y="315.0" width="2" height="1.0" fill="#7B9BC3"/>
<rect x="921" y="311" width="9" height="4" fill="#7B9BC3"/>
<rect x="934" y="306.0" width="2" height="22.0" fill="#FF6A20"/>
<rect x="930" y="312" width="9" height="8" fill="#FF6A20"/>
<rect x="943" y="308.0" width="2" height="1.0" fill="#7B9BC3"/>
<rect x="943" y="320.0" width="2" height="4.0" fill="#7B9BC3"/>
<rect x="941" y="310" width="7" height="9" fill="none" stroke="#7B9BC3" stroke-width="2"/>
<rect x="953" y="290.0" width="2" height="11.0" fill="#7B9BC3"/>
<rect x="953" y="310.0" width="2" height="4.0" fill="#7B9BC3"/>
<rect x="950" y="302" width="7" height="7" fill="none" stroke="#7B9BC3" stroke-width="2"/>
<rect x="962" y="292.0" width="2" height="1.0" fill="#7B9BC3"/>
<rect x="962" y="310.0" width="2" height="9.0" fill="#7B9BC3"/>
<rect x="960" y="294" width="7" height="15" fill="none" stroke="#7B9BC3" stroke-width="2"/>
<rect x="972" y="266.0" width="2" height="9.0" fill="#7B9BC3"/>
<rect x="972" y="294.0" width="2" height="4.0" fill="#7B9BC3"/>
<rect x="969" y="276" width="7" height="17" fill="none" stroke="#7B9BC3" stroke-width="2"/>
<rect x="981" y="268.0" width="2" height="14.0" fill="#FF6A20"/>
<rect x="978" y="274" width="9" height="3" fill="#FF6A20"/>
<rect x="991" y="262.0" width="2" height="3.0" fill="#7B9BC3"/>
<rect x="991" y="278.0" width="2" height="2.0" fill="#7B9BC3"/>
<rect x="988" y="266" width="7" height="11" fill="none" stroke="#7B9BC3" stroke-width="2"/>
<rect x="1000" y="264.0" width="2" height="10.0" fill="#FF6A20"/>
<rect x="997" y="266" width="9" height="2" fill="#FF6A20"/>
<rect x="1010" y="262.0" width="2" height="19.0" fill="#FF6A20"/>
<rect x="1006" y="266" width="9" height="4" fill="#FF6A20"/>
<rect x="1019" y="264.0" width="2" height="36.0" fill="#FF6A20"/>
<rect x="1016" y="269" width="9" height="21" fill="#FF6A20"/>
<rect x="1029" y="273.0" width="2" height="10.0" fill="#7B9BC3"/>
<rect x="1029" y="290.0" width="2" height="10.0" fill="#7B9BC3"/>
<rect x="1026" y="284" width="7" height="5" fill="none" stroke="#7B9BC3" stroke-width="2"/>
<rect x="1038" y="280.0" width="2" height="25.0" fill="#FF6A20"/>
<rect x="1035" y="282" width="9" height="12" fill="#FF6A20"/>
<rect x="1048" y="285.0" width="2" height="25.0" fill="#FF6A20"/>
<rect x="1044" y="293" width="9" height="11" fill="#FF6A20"/>
<rect x="1057" y="294.0" width="2" height="2.0" fill="#7B9BC3"/>
<rect x="1057" y="304.0" width="2" height="5.0" fill="#7B9BC3"/>
<rect x="1055" y="297" width="7" height="6" fill="none" stroke="#7B9BC3" stroke-width="2"/>
<rect x="1067" y="278.0" width="2" height="29.0" fill="#FF6A20"/>
<rect x="1063" y="296" width="9" height="9" fill="#FF6A20"/>
<rect x="1076" y="299.0" width="2" height="3.0" fill="#7B9BC3"/>
<rect x="1076" y="305.0" width="2" height="15.0" fill="#7B9BC3"/>
<rect x="1073" y="302" width="9" height="3" fill="#7B9BC3"/>
<rect x="1086" y="290.0" width="2" height="7.0" fill="#7B9BC3"/>
<rect x="1086" y="305.0" width="2" height="1.0" fill="#7B9BC3"/>
<rect x="1083" y="298" width="7" height="6" fill="none" stroke="#7B9BC3" stroke-width="2"/>
<rect x="1095" y="260.0" width="2" height="1.0" fill="#7B9BC3"/>
<rect x="1095" y="298.0" width="2" height="2.0" fill="#7B9BC3"/>
<rect x="1093" y="262" width="7" height="35" fill="none" stroke="#7B9BC3" stroke-width="2"/>
<rect x="1105" y="251.0" width="2" height="23.0" fill="#FF6A20"/>
<rect x="1101" y="263" width="9" height="5" fill="#FF6A20"/>
<rect x="1114" y="256.0" width="2" height="6.0" fill="#7B9BC3"/>
<rect x="1114" y="268.0" width="2" height="2.0" fill="#7B9BC3"/>
<rect x="1112" y="263" width="7" height="4" fill="none" stroke="#7B9BC3" stroke-width="2"/>
<rect x="1124" y="215.0" width="2" height="1.0" fill="#7B9BC3"/>
<rect x="1124" y="265.0" width="2" height="2.0" fill="#7B9BC3"/>
<rect x="1121" y="217" width="7" height="47" fill="none" stroke="#7B9BC3" stroke-width="2"/>
<polyline fill="none" stroke="#006400" stroke-width="1" stroke-dasharray="3,3" points="0.00,376.00 4.40,381.00 13.90,375.00 23.40,360.00 32.90,347.50 42.40,372.50 51.90,394.50 61.40,502.50 70.90,534.50 80.40,526.00 89.90,501.00 99.40,542.00 108.90,535.00 118.40,505.00 127.90,564.50 137.40,518.00 146.90,465.00 156.40,467.50 165.90,478.75 175.40,459.00 184.90,411.40 194.40,399.00 203.90,426.60 213.40,457.00 222.90,418.50 232.40,406.00 241.90,391.00 251.40,407.50 260.90,431.00 270.40,410.00 279.90,407.50 289.40,406.00 298.90,355.00 308.40,352.50 317.90,352.50 327.40,366.25 336.90,352.50 346.40,357.50 355.90,285.00 365.40,281.25 374.90,302.50 384.40,331.25 393.90,307.50 403.40,320.00 412.90,312.50 422.40,317.50 431.90,345.00 441.40,241.25 450.90,326.00 460.40,402.50 469.90,345.00 479.40,313.00 488.90,385.00 498.40,425.00 507.90,458.75 517.40,412.50 526.90,390.00 536.40,438.75 545.90,392.50 555.40,357.50 564.90,440.00 574.40,380.00 583.90,373.75 593.40,410.00 602.90,345.00 612.40,323.75 621.90,327.50 631.40,328.75 640.90,416.00 650.40,416.00 659.90,347.00 669.40,332.50 678.90,342.50 688.40,302.50 697.90,281.25 707.40,291.25 716.90,290.00 726.40,293.00 735.90,280.00 745.40,287.50 754.90,270.00 764.40,272.50 773.90,377.00 783.40,365.00 792.90,335.00 802.40,375.50 811.90,366.00 821.40,371.00 830.90,400.00 840.40,401.00 849.90,373.00 859.40,396.00 868.90,385.00 878.40,340.00 887.90,381.00 897.40,382.50 906.90,340.00 916.40,313.75 925.90,322.50 935.40,330.00 944.90,320.00 954.40,302.50 963.90,290.00 973.40,275.00 982.90,285.00 992.40,267.50 1001.90,268.75 1011.40,271.25 1020.90,303.75 1030.40,295.00 1039.90,338.50 1049.40,342.50 1058.90,312.50 1068.40,338.00 1077.90,320.00 1087.40,307.50 1096.90,261.25 1106.40,275.00 1115.90,263.50 1125.40,216.25"/>
<polyline fill="none" stroke="#FF0000" stroke-width="1" stroke-dasharray="3,3" points="0.00,346.00 4.40,352.50 13.90,340.00 23.40,335.00 32.90,317.00 42.40,348.75 51.90,362.50 61.40,450.00 70.90,472.70 80.40,479.00 89.90,456.00 99.40,492.50 108.90,491.00 118.40,483.00 127.90,513.75 137.40,488.00 146.90,410.40 156.40,428.00 165.90,439.00 175.40,412.00 184.90,367.00 194.40,360.00 203.90,386.00 213.40,410.50 222.90,355.00 232.40,348.50 241.90,343.30 251.40,376.00 260.90,399.00 270.40,361.25 279.90,365.00 289.40,348.75 298.90,333.00 308.40,330.00 317.90,330.00 327.40,342.50 336.90,338.75 346.40,342.50 355.90,266.25 365.40,260.00 374.90,268.75 384.40,295.00 393.90,287.50 403.40,296.25 412.90,293.75 422.40,297.50 431.90,293.75 441.40,225.00 450.90,277.00 460.40,331.00 469.90,301.00 479.40,280.00 488.90,320.00 498.40,362.50 507.90,401.00 517.40,373.75 526.90,358.00 536.40,383.75 545.90,350.00 555.40,323.50 564.90,366.00 574.40,355.00 583.90,352.00 593.40,351.50 602.90,333.00 612.40,305.50 621.90,311.25 631.40,312.50 640.90,361.00 650.40,372.00 659.90,334.60 669.40,307.00 678.90,325.00 688.40,281.25 697.90,260.00 707.40,275.00 716.90,272.50 726.40,275.00 735.90,265.00 745.40,270.00 754.90,250.00 764.40,256.00 773.90,325.00 783.40,330.00 792.90,312.50 802.40,334.60 811.90,332.00 821.40,335.00 830.90,356.00 840.40,367.00 849.90,342.50 859.40,357.50 868.90,347.50 878.40,323.75 887.90,333.75 897.40,340.00 906.90,331.00 916.40,297.00 925.90,307.50 935.40,311.00 944.90,302.50 954.40,287.50 963.90,276.25 973.40,258.75 982.90,268.75 992.40,255.75 1001.90,257.50 1011.40,262.50 1020.90,290.00 1030.40,282.50 1039.90,290.00 1049.40,297.50 1058.90,293.75 1068.40,301.50 1077.90,290.00 1087.40,286.25 1096.90,245.50 1106.40,261.25 1115.90,250.00 1125.40,197.50"/>
<text x="161.3" y="447.3" font-size="12" fill="#FF0000" stroke="#FF0000" stroke-width="0.6" textLength="6.6" lengthAdjust="spacingAndGlyphs">X</text>
<text x="199.3" y="391.3" font-size="12" fill="#FF0000" stroke="#FF0000" stroke-width="0.6" textLength="6.6" lengthAdjust="spacingAndGlyphs">X</text>
<text x="246.8" y="381.8" font-size="12" fill="#FF0000" stroke="#FF0000" stroke-width="0.6" textLength="6.6" lengthAdjust="spacingAndGlyphs">X</text>
<text x="465.5" y="350.1" font-size="12" fill="#14601f" stroke="#14601f" stroke-width="0.6" textLength="6.6" lengthAdjust="spacingAndGlyphs">X</text>
<text x="522.5" y="392.3" font-size="12" fill="#14601f" stroke="#14601f" stroke-width="0.6" textLength="6.6" lengthAdjust="spacingAndGlyphs">X</text>
<text x="541.5" y="398.1" font-size="12" fill="#14601f" stroke="#14601f" stroke-width="0.6" textLength="6.6" lengthAdjust="spacingAndGlyphs">X</text>
<text x="788.5" y="338.1" font-size="12" fill="#14601f" stroke="#14601f" stroke-width="0.6" textLength="6.6" lengthAdjust="spacingAndGlyphs">X</text>
<text x="845.5" y="370.6" font-size="12" fill="#14601f" stroke="#14601f" stroke-width="0.6" textLength="6.6" lengthAdjust="spacingAndGlyphs">X</text>
<polyline fill="none" stroke="#000" stroke-width="1" points="441.75,573.50 488.50,574.75 536.75,511.25 583.60,443.25 631.25,385.25 679.50,370.50 726.25,387.50 764.50,377.00 811.25,373.25 859.25,378.25 906.00,359.40 953.50,348.50 1001.50,376.25 1048.25,398.25 1096.25,382.50"/>
<ellipse cx="441.8" cy="573.5" rx="2.2" ry="3.2" fill="none" stroke="#000" stroke-width="1.2" shape-rendering="auto"/>
<ellipse cx="488.5" cy="574.8" rx="2.2" ry="3.2" fill="none" stroke="#000" stroke-width="1.2" shape-rendering="auto"/>
<ellipse cx="536.8" cy="511.2" rx="2.2" ry="3.2" fill="none" stroke="#000" stroke-width="1.2" shape-rendering="auto"/>
<ellipse cx="583.6" cy="443.2" rx="2.2" ry="3.2" fill="none" stroke="#000" stroke-width="1.2" shape-rendering="auto"/>
<ellipse cx="631.2" cy="385.2" rx="2.2" ry="3.2" fill="none" stroke="#000" stroke-width="1.2" shape-rendering="auto"/>
<ellipse cx="679.5" cy="370.5" rx="2.2" ry="3.2" fill="none" stroke="#000" stroke-width="1.2" shape-rendering="auto"/>
<ellipse cx="726.2" cy="387.5" rx="2.2" ry="3.2" fill="none" stroke="#000" stroke-width="1.2" shape-rendering="auto"/>
<ellipse cx="764.5" cy="377.0" rx="2.2" ry="3.2" fill="none" stroke="#000" stroke-width="1.2" shape-rendering="auto"/>
<ellipse cx="811.2" cy="373.2" rx="2.2" ry="3.2" fill="none" stroke="#000" stroke-width="1.2" shape-rendering="auto"/>
<ellipse cx="859.2" cy="378.2" rx="2.2" ry="3.2" fill="none" stroke="#000" stroke-width="1.2" shape-rendering="auto"/>
<ellipse cx="906.0" cy="359.4" rx="2.2" ry="3.2" fill="none" stroke="#000" stroke-width="1.2" shape-rendering="auto"/>
<ellipse cx="953.5" cy="348.5" rx="2.2" ry="3.2" fill="none" stroke="#000" stroke-width="1.2" shape-rendering="auto"/>
<ellipse cx="1001.5" cy="376.2" rx="2.2" ry="3.2" fill="none" stroke="#000" stroke-width="1.2" shape-rendering="auto"/>
<ellipse cx="1048.2" cy="398.2" rx="2.2" ry="3.2" fill="none" stroke="#000" stroke-width="1.2" shape-rendering="auto"/>
<ellipse cx="1096.2" cy="382.5" rx="2.2" ry="3.2" fill="none" stroke="#000" stroke-width="1.2" shape-rendering="auto"/>
<rect x="299" y="0" width="1" height="610" fill="#008000"/>
<rect x="1234" y="159" width="1" height="451" fill="#000"/>
<rect x="1235" y="161" width="2" height="1" fill="#000"/>
<rect x="1235" y="163" width="6" height="1" fill="#000"/>
<rect x="1235" y="165" width="2" height="1" fill="#000"/>
<rect x="1235" y="167" width="2" height="1" fill="#000"/>
<rect x="1235" y="169" width="2" height="1" fill="#000"/>
<rect x="1235" y="171" width="2" height="1" fill="#000"/>
<rect x="1235" y="173" width="6" height="1" fill="#000"/>
<rect x="1235" y="175" width="2" height="1" fill="#000"/>
<rect x="1235" y="177" width="2" height="1" fill="#000"/>
<rect x="1235" y="179" width="2" height="1" fill="#000"/>
<rect x="1235" y="181" width="2" height="1" fill="#000"/>
<rect x="1235" y="183" width="6" height="1" fill="#000"/>
<rect x="1235" y="185" width="2" height="1" fill="#000"/>
<rect x="1235" y="187" width="2" height="1" fill="#000"/>
<rect x="1235" y="189" width="2" height="1" fill="#000"/>
<rect x="1235" y="191" width="2" height="1" fill="#000"/>
<rect x="1235" y="193" width="6" height="1" fill="#000"/>
<rect x="1235" y="195" width="2" height="1" fill="#000"/>
<rect x="1235" y="197" width="2" height="1" fill="#000"/>
<rect x="1235" y="199" width="2" height="1" fill="#000"/>
<rect x="1235" y="201" width="2" height="1" fill="#000"/>
<rect x="1235" y="203" width="6" height="1" fill="#000"/>
<rect x="1235" y="205" width="2" height="1" fill="#000"/>
<rect x="1235" y="207" width="2" height="1" fill="#000"/>
<rect x="1235" y="209" width="2" height="1" fill="#000"/>
<rect x="1235" y="211" width="2" height="1" fill="#000"/>
<rect x="1235" y="213" width="6" height="1" fill="#000"/>
<rect x="1235" y="215" width="2" height="1" fill="#000"/>
<rect x="1235" y="217" width="2" height="1" fill="#000"/>
<rect x="1235" y="219" width="2" height="1" fill="#000"/>
<rect x="1235" y="221" width="2" height="1" fill="#000"/>
<rect x="1235" y="223" width="6" height="1" fill="#000"/>
<rect x="1235" y="225" width="2" height="1" fill="#000"/>
<rect x="1235" y="227" width="2" height="1" fill="#000"/>
<rect x="1235" y="228" width="2" height="1" fill="#000"/>
<rect x="1235" y="230" width="2" height="1" fill="#000"/>
<rect x="1235" y="232" width="6" height="1" fill="#000"/>
<rect x="1235" y="234" width="2" height="1" fill="#000"/>
<rect x="1235" y="236" width="2" height="1" fill="#000"/>
<rect x="1235" y="238" width="2" height="1" fill="#000"/>
<rect x="1235" y="240" width="2" height="1" fill="#000"/>
<rect x="1235" y="242" width="6" height="1" fill="#000"/>
<rect x="1235" y="244" width="2" height="1" fill="#000"/>
<rect x="1235" y="246" width="2" height="1" fill="#000"/>
<rect x="1235" y="248" width="2" height="1" fill="#000"/>
<rect x="1235" y="250" width="2" height="1" fill="#000"/>
<rect x="1235" y="252" width="6" height="1" fill="#000"/>
<rect x="1235" y="254" width="2" height="1" fill="#000"/>
<rect x="1235" y="256" width="2" height="1" fill="#000"/>
<rect x="1235" y="258" width="2" height="1" fill="#000"/>
<rect x="1235" y="260" width="2" height="1" fill="#000"/>
<rect x="1235" y="262" width="6" height="1" fill="#000"/>
<rect x="1235" y="264" width="2" height="1" fill="#000"/>
<rect x="1235" y="266" width="2" height="1" fill="#000"/>
<rect x="1235" y="268" width="2" height="1" fill="#000"/>
<rect x="1235" y="270" width="2" height="1" fill="#000"/>
<rect x="1235" y="272" width="6" height="1" fill="#000"/>
<rect x="1235" y="274" width="2" height="1" fill="#000"/>
<rect x="1235" y="276" width="2" height="1" fill="#000"/>
<rect x="1235" y="278" width="2" height="1" fill="#000"/>
<rect x="1235" y="280" width="2" height="1" fill="#000"/>
<rect x="1235" y="282" width="6" height="1" fill="#000"/>
<rect x="1235" y="284" width="2" height="1" fill="#000"/>
<rect x="1235" y="286" width="2" height="1" fill="#000"/>
<rect x="1235" y="288" width="2" height="1" fill="#000"/>
<rect x="1235" y="290" width="2" height="1" fill="#000"/>
<rect x="1235" y="292" width="6" height="1" fill="#000"/>
<rect x="1235" y="294" width="2" height="1" fill="#000"/>
<rect x="1235" y="296" width="2" height="1" fill="#000"/>
<rect x="1235" y="298" width="2" height="1" fill="#000"/>
<rect x="1235" y="300" width="2" height="1" fill="#000"/>
<rect x="1235" y="302" width="6" height="1" fill="#000"/>
<rect x="1235" y="304" width="2" height="1" fill="#000"/>
<rect x="1235" y="306" width="2" height="1" fill="#000"/>
<rect x="1235" y="308" width="2" height="1" fill="#000"/>
<rect x="1235" y="310" width="2" height="1" fill="#000"/>
<rect x="1235" y="312" width="6" height="1" fill="#000"/>
<rect x="1235" y="314" width="2" height="1" fill="#000"/>
<rect x="1235" y="316" width="2" height="1" fill="#000"/>
<rect x="1235" y="318" width="2" height="1" fill="#000"/>
<rect x="1235" y="320" width="2" height="1" fill="#000"/>
<rect x="1235" y="322" width="6" height="1" fill="#000"/>
<rect x="1235" y="324" width="2" height="1" fill="#000"/>
<rect x="1235" y="326" width="2" height="1" fill="#000"/>
<rect x="1235" y="328" width="2" height="1" fill="#000"/>
<rect x="1235" y="330" width="2" height="1" fill="#000"/>
<rect x="1235" y="332" width="6" height="1" fill="#000"/>
<rect x="1235" y="334" width="2" height="1" fill="#000"/>
<rect x="1235" y="336" width="2" height="1" fill="#000"/>
<rect x="1235" y="338" width="2" height="1" fill="#000"/>
<rect x="1235" y="340" width="2" height="1" fill="#000"/>
<rect x="1235" y="342" width="6" height="1" fill="#000"/>
<rect x="1235" y="344" width="2" height="1" fill="#000"/>
<rect x="1235" y="346" width="2" height="1" fill="#000"/>
<rect x="1235" y="348" width="2" height="1" fill="#000"/>
<rect x="1235" y="350" width="2" height="1" fill="#000"/>
<rect x="1235" y="352" width="6" height="1" fill="#000"/>
<rect x="1235" y="354" width="2" height="1" fill="#000"/>
<rect x="1235" y="356" width="2" height="1" fill="#000"/>
<rect x="1235" y="358" width="2" height="1" fill="#000"/>
<rect x="1235" y="360" width="2" height="1" fill="#000"/>
<rect x="1235" y="362" width="6" height="1" fill="#000"/>
<rect x="1235" y="364" width="2" height="1" fill="#000"/>
<rect x="1235" y="366" width="2" height="1" fill="#000"/>
<rect x="1235" y="368" width="2" height="1" fill="#000"/>
<rect x="1235" y="369" width="2" height="1" fill="#000"/>
<rect x="1235" y="371" width="6" height="1" fill="#000"/>
<rect x="1235" y="373" width="2" height="1" fill="#000"/>
<rect x="1235" y="375" width="2" height="1" fill="#000"/>
<rect x="1235" y="377" width="2" height="1" fill="#000"/>
<rect x="1235" y="379" width="2" height="1" fill="#000"/>
<rect x="1235" y="381" width="6" height="1" fill="#000"/>
<rect x="1235" y="383" width="2" height="1" fill="#000"/>
<rect x="1235" y="385" width="2" height="1" fill="#000"/>
<rect x="1235" y="387" width="2" height="1" fill="#000"/>
<rect x="1235" y="389" width="2" height="1" fill="#000"/>
<rect x="1235" y="391" width="6" height="1" fill="#000"/>
<rect x="1235" y="393" width="2" height="1" fill="#000"/>
<rect x="1235" y="395" width="2" height="1" fill="#000"/>
<rect x="1235" y="397" width="2" height="1" fill="#000"/>
<rect x="1235" y="399" width="2" height="1" fill="#000"/>
<rect x="1235" y="401" width="6" height="1" fill="#000"/>
<rect x="1235" y="403" width="2" height="1" fill="#000"/>
<rect x="1235" y="405" width="2" height="1" fill="#000"/>
<rect x="1235" y="407" width="2" height="1" fill="#000"/>
<rect x="1235" y="409" width="2" height="1" fill="#000"/>
<rect x="1235" y="411" width="6" height="1" fill="#000"/>
<rect x="1235" y="413" width="2" height="1" fill="#000"/>
<rect x="1235" y="415" width="2" height="1" fill="#000"/>
<rect x="1235" y="417" width="2" height="1" fill="#000"/>
<rect x="1235" y="419" width="2" height="1" fill="#000"/>
<rect x="1235" y="421" width="6" height="1" fill="#000"/>
<rect x="1235" y="423" width="2" height="1" fill="#000"/>
<rect x="1235" y="425" width="2" height="1" fill="#000"/>
<rect x="1235" y="427" width="2" height="1" fill="#000"/>
<rect x="1235" y="429" width="2" height="1" fill="#000"/>
<rect x="1235" y="431" width="6" height="1" fill="#000"/>
<rect x="1235" y="433" width="2" height="1" fill="#000"/>
<rect x="1235" y="435" width="2" height="1" fill="#000"/>
<rect x="1235" y="437" width="2" height="1" fill="#000"/>
<rect x="1235" y="439" width="2" height="1" fill="#000"/>
<rect x="1235" y="441" width="6" height="1" fill="#000"/>
<rect x="1235" y="443" width="2" height="1" fill="#000"/>
<rect x="1235" y="445" width="2" height="1" fill="#000"/>
<rect x="1235" y="447" width="2" height="1" fill="#000"/>
<rect x="1235" y="449" width="2" height="1" fill="#000"/>
<rect x="1235" y="451" width="6" height="1" fill="#000"/>
<rect x="1235" y="453" width="2" height="1" fill="#000"/>
<rect x="1235" y="455" width="2" height="1" fill="#000"/>
<rect x="1235" y="457" width="2" height="1" fill="#000"/>
<rect x="1235" y="459" width="2" height="1" fill="#000"/>
<rect x="1235" y="461" width="6" height="1" fill="#000"/>
<rect x="1235" y="463" width="2" height="1" fill="#000"/>
<rect x="1235" y="465" width="2" height="1" fill="#000"/>
<rect x="1235" y="467" width="2" height="1" fill="#000"/>
<rect x="1235" y="469" width="2" height="1" fill="#000"/>
<rect x="1235" y="471" width="6" height="1" fill="#000"/>
<rect x="1235" y="473" width="2" height="1" fill="#000"/>
<rect x="1235" y="475" width="2" height="1" fill="#000"/>
<rect x="1235" y="477" width="2" height="1" fill="#000"/>
<rect x="1235" y="479" width="2" height="1" fill="#000"/>
<rect x="1235" y="481" width="6" height="1" fill="#000"/>
<rect x="1235" y="483" width="2" height="1" fill="#000"/>
<rect x="1235" y="485" width="2" height="1" fill="#000"/>
<rect x="1235" y="487" width="2" height="1" fill="#000"/>
<rect x="1235" y="489" width="2" height="1" fill="#000"/>
<rect x="1235" y="491" width="6" height="1" fill="#000"/>
<rect x="1235" y="493" width="2" height="1" fill="#000"/>
<rect x="1235" y="495" width="2" height="1" fill="#000"/>
<rect x="1235" y="497" width="2" height="1" fill="#000"/>
<rect x="1235" y="499" width="2" height="1" fill="#000"/>
<rect x="1235" y="501" width="6" height="1" fill="#000"/>
<rect x="1235" y="503" width="2" height="1" fill="#000"/>
<rect x="1235" y="505" width="2" height="1" fill="#000"/>
<rect x="1235" y="507" width="2" height="1" fill="#000"/>
<rect x="1235" y="509" width="2" height="1" fill="#000"/>
<rect x="1235" y="511" width="6" height="1" fill="#000"/>
<rect x="1235" y="512" width="2" height="1" fill="#000"/>
<rect x="1235" y="514" width="2" height="1" fill="#000"/>
<rect x="1235" y="516" width="2" height="1" fill="#000"/>
<rect x="1235" y="518" width="2" height="1" fill="#000"/>
<rect x="1235" y="520" width="6" height="1" fill="#000"/>
<rect x="1235" y="522" width="2" height="1" fill="#000"/>
<rect x="1235" y="524" width="2" height="1" fill="#000"/>
<rect x="1235" y="526" width="2" height="1" fill="#000"/>
<rect x="1235" y="528" width="2" height="1" fill="#000"/>
<rect x="1235" y="530" width="6" height="1" fill="#000"/>
<rect x="1235" y="532" width="2" height="1" fill="#000"/>
<rect x="1235" y="534" width="2" height="1" fill="#000"/>
<rect x="1235" y="536" width="2" height="1" fill="#000"/>
<rect x="1235" y="538" width="2" height="1" fill="#000"/>
<rect x="1235" y="540" width="6" height="1" fill="#000"/>
<rect x="1235" y="542" width="2" height="1" fill="#000"/>
<rect x="1235" y="544" width="2" height="1" fill="#000"/>
<rect x="1235" y="546" width="2" height="1" fill="#000"/>
<rect x="1235" y="548" width="2" height="1" fill="#000"/>
<rect x="1235" y="550" width="6" height="1" fill="#000"/>
<rect x="1235" y="552" width="2" height="1" fill="#000"/>
<rect x="1235" y="554" width="2" height="1" fill="#000"/>
<rect x="1235" y="556" width="2" height="1" fill="#000"/>
<rect x="1235" y="558" width="2" height="1" fill="#000"/>
<rect x="1235" y="560" width="6" height="1" fill="#000"/>
<rect x="1235" y="562" width="2" height="1" fill="#000"/>
<rect x="1235" y="564" width="2" height="1" fill="#000"/>
<rect x="1235" y="566" width="2" height="1" fill="#000"/>
<rect x="1235" y="568" width="2" height="1" fill="#000"/>
<rect x="1235" y="570" width="6" height="1" fill="#000"/>
<rect x="1235" y="572" width="2" height="1" fill="#000"/>
<rect x="1235" y="574" width="2" height="1" fill="#000"/>
<rect x="1235" y="576" width="2" height="1" fill="#000"/>
<rect x="1235" y="578" width="2" height="1" fill="#000"/>
<rect x="1235" y="580" width="6" height="1" fill="#000"/>
<rect x="1235" y="582" width="2" height="1" fill="#000"/>
<rect x="1235" y="584" width="2" height="1" fill="#000"/>
<rect x="1235" y="586" width="2" height="1" fill="#000"/>
<rect x="1235" y="588" width="2" height="1" fill="#000"/>
<rect x="1235" y="590" width="6" height="1" fill="#000"/>
<rect x="1235" y="592" width="2" height="1" fill="#000"/>
<rect x="1235" y="594" width="2" height="1" fill="#000"/>
<rect x="1235" y="596" width="2" height="1" fill="#000"/>
<rect x="1235" y="598" width="2" height="1" fill="#000"/>
<rect x="1235" y="600" width="6" height="1" fill="#000"/>
<rect x="1235" y="602" width="2" height="1" fill="#000"/>
<rect x="1235" y="604" width="2" height="1" fill="#000"/>
<rect x="1235" y="606" width="2" height="1" fill="#000"/>
<rect x="1235" y="608" width="2" height="1" fill="#000"/>
<rect x="1235" y="609" width="6" height="1" fill="#000"/>
<text transform="translate(1268.1,167.1) scale(0.93,1)" font-size="9.7" fill="#000" text-anchor="end">109.5</text>
<text transform="translate(1268.1,177.1) scale(0.93,1)" font-size="9.7" fill="#000" text-anchor="end">109.0</text>
<text transform="translate(1268.1,187.0) scale(0.93,1)" font-size="9.7" fill="#000" text-anchor="end">108.5</text>
<text transform="translate(1268.1,196.9) scale(0.93,1)" font-size="9.7" fill="#000" text-anchor="end">108.0</text>
<text transform="translate(1268.1,206.9) scale(0.93,1)" font-size="9.7" fill="#000" text-anchor="end">107.5</text>
<text transform="translate(1268.1,216.8) scale(0.93,1)" font-size="9.7" fill="#000" text-anchor="end">107.0</text>
<text transform="translate(1268.1,226.7) scale(0.93,1)" font-size="9.7" fill="#000" text-anchor="end">106.5</text>
<text transform="translate(1268.1,236.7) scale(0.93,1)" font-size="9.7" fill="#000" text-anchor="end">106.0</text>
<text transform="translate(1268.1,246.6) scale(0.93,1)" font-size="9.7" fill="#000" text-anchor="end">105.5</text>
<text transform="translate(1268.1,256.5) scale(0.93,1)" font-size="9.7" fill="#000" text-anchor="end">105.0</text>
<text transform="translate(1268.1,266.4) scale(0.93,1)" font-size="9.7" fill="#000" text-anchor="end">104.5</text>
<text transform="translate(1268.1,276.4) scale(0.93,1)" font-size="9.7" fill="#000" text-anchor="end">104.0</text>
<text transform="translate(1268.1,286.3) scale(0.93,1)" font-size="9.7" fill="#000" text-anchor="end">103.5</text>
<text transform="translate(1268.1,296.2) scale(0.93,1)" font-size="9.7" fill="#000" text-anchor="end">103.0</text>
<text transform="translate(1268.1,306.2) scale(0.93,1)" font-size="9.7" fill="#000" text-anchor="end">102.5</text>
<text transform="translate(1268.1,316.1) scale(0.93,1)" font-size="9.7" fill="#000" text-anchor="end">102.0</text>
<text transform="translate(1268.1,326.0) scale(0.93,1)" font-size="9.7" fill="#000" text-anchor="end">101.5</text>
<text transform="translate(1268.1,336.0) scale(0.93,1)" font-size="9.7" fill="#000" text-anchor="end">101.0</text>
<text transform="translate(1268.1,345.9) scale(0.93,1)" font-size="9.7" fill="#000" text-anchor="end">100.5</text>
<text transform="translate(1268.1,355.8) scale(0.93,1)" font-size="9.7" fill="#000" text-anchor="end">100.0</text>
<text transform="translate(1268.1,365.7) scale(0.93,1)" font-size="9.7" fill="#000" text-anchor="end">99.5</text>
<text transform="translate(1268.1,375.7) scale(0.93,1)" font-size="9.7" fill="#000" text-anchor="end">99.0</text>
<text transform="translate(1268.1,385.6) scale(0.93,1)" font-size="9.7" fill="#000" text-anchor="end">98.5</text>
<text transform="translate(1268.1,395.5) scale(0.93,1)" font-size="9.7" fill="#000" text-anchor="end">98.0</text>
<text transform="translate(1268.1,405.5) scale(0.93,1)" font-size="9.7" fill="#000" text-anchor="end">97.5</text>
<text transform="translate(1268.1,415.4) scale(0.93,1)" font-size="9.7" fill="#000" text-anchor="end">97.0</text>
<text transform="translate(1268.1,425.3) scale(0.93,1)" font-size="9.7" fill="#000" text-anchor="end">96.5</text>
<text transform="translate(1268.1,435.3) scale(0.93,1)" font-size="9.7" fill="#000" text-anchor="end">96.0</text>
<text transform="translate(1268.1,445.2) scale(0.93,1)" font-size="9.7" fill="#000" text-anchor="end">95.5</text>
<text transform="translate(1268.1,455.1) scale(0.93,1)" font-size="9.7" fill="#000" text-anchor="end">95.0</text>
<text transform="translate(1268.1,465.0) scale(0.93,1)" font-size="9.7" fill="#000" text-anchor="end">94.5</text>
<text transform="translate(1268.1,475.0) scale(0.93,1)" font-size="9.7" fill="#000" text-anchor="end">94.0</text>
<text transform="translate(1268.1,484.9) scale(0.93,1)" font-size="9.7" fill="#000" text-anchor="end">93.5</text>
<text transform="translate(1268.1,494.8) scale(0.93,1)" font-size="9.7" fill="#000" text-anchor="end">93.0</text>
<text transform="translate(1268.1,504.8) scale(0.93,1)" font-size="9.7" fill="#000" text-anchor="end">92.5</text>
<text transform="translate(1268.1,514.7) scale(0.93,1)" font-size="9.7" fill="#000" text-anchor="end">92.0</text>
<text transform="translate(1268.1,524.6) scale(0.93,1)" font-size="9.7" fill="#000" text-anchor="end">91.5</text>
<text transform="translate(1268.1,534.6) scale(0.93,1)" font-size="9.7" fill="#000" text-anchor="end">91.0</text>
<text transform="translate(1268.1,544.5) scale(0.93,1)" font-size="9.7" fill="#000" text-anchor="end">90.5</text>
<text transform="translate(1268.1,554.4) scale(0.93,1)" font-size="9.7" fill="#000" text-anchor="end">90.0</text>
<text transform="translate(1268.1,564.4) scale(0.93,1)" font-size="9.7" fill="#000" text-anchor="end">89.5</text>
<text transform="translate(1268.1,574.3) scale(0.93,1)" font-size="9.7" fill="#000" text-anchor="end">89.0</text>
<text transform="translate(1268.1,584.2) scale(0.93,1)" font-size="9.7" fill="#000" text-anchor="end">88.5</text>
<text transform="translate(1268.1,594.1) scale(0.93,1)" font-size="9.7" fill="#000" text-anchor="end">88.0</text>
<rect x="0" y="602" width="1235" height="1" fill="#000"/>
<rect x="0" y="621" width="1235" height="1" fill="#000"/>
<rect x="4" y="610" width="1" height="11" fill="#000"/>
<text transform="translate(6,619) scale(0.93,1)" font-size="9.7" fill="#000">23</text>
<rect x="42" y="610" width="1" height="11" fill="#000"/>
<text transform="translate(44,619) scale(0.93,1)" font-size="9.7" fill="#000">30</text>
<rect x="61" y="610" width="1" height="11" fill="#000"/>
<rect x="80" y="610" width="1" height="11" fill="#000"/>
<text transform="translate(82,619) scale(0.93,1)" font-size="9.7" fill="#000">6</text>
<rect x="127" y="610" width="1" height="11" fill="#000"/>
<text transform="translate(129,619) scale(0.93,1)" font-size="9.7" fill="#000">13</text>
<rect x="175" y="610" width="1" height="11" fill="#000"/>
<text transform="translate(177,619) scale(0.93,1)" font-size="9.7" fill="#000">21</text>
<rect x="213" y="610" width="1" height="11" fill="#000"/>
<text transform="translate(215,619) scale(0.93,1)" font-size="9.7" fill="#000">27</text>
<rect x="260" y="610" width="1" height="11" fill="#000"/>
<text transform="translate(262,619) scale(0.93,1)" font-size="9.7" fill="#000">3</text>
<rect x="308" y="610" width="1" height="11" fill="#000"/>
<text transform="translate(310,619) scale(0.93,1)" font-size="9.7" fill="#000">10</text>
<rect x="355" y="610" width="1" height="11" fill="#000"/>
<text transform="translate(357,619) scale(0.93,1)" font-size="9.7" fill="#000">18</text>
<rect x="393" y="610" width="1" height="11" fill="#000"/>
<text transform="translate(395,619) scale(0.93,1)" font-size="9.7" fill="#000">24</text>
<rect x="441" y="610" width="1" height="11" fill="#000"/>
<text transform="translate(443,619) scale(0.93,1)" font-size="9.7" fill="#000">3</text>
<rect x="488" y="610" width="1" height="11" fill="#000"/>
<text transform="translate(490,619) scale(0.93,1)" font-size="9.7" fill="#000">10</text>
<rect x="536" y="610" width="1" height="11" fill="#000"/>
<text transform="translate(538,619) scale(0.93,1)" font-size="9.7" fill="#000">17</text>
<rect x="583" y="610" width="1" height="11" fill="#000"/>
<text transform="translate(585,619) scale(0.93,1)" font-size="9.7" fill="#000">24</text>
<rect x="631" y="610" width="1" height="11" fill="#000"/>
<text transform="translate(633,619) scale(0.93,1)" font-size="9.7" fill="#000">31</text>
<rect x="640" y="610" width="1" height="11" fill="#000"/>
<rect x="678" y="610" width="1" height="11" fill="#000"/>
<text transform="translate(680,619) scale(0.93,1)" font-size="9.7" fill="#000">7</text>
<rect x="726" y="610" width="1" height="11" fill="#000"/>
<text transform="translate(728,619) scale(0.93,1)" font-size="9.7" fill="#000">14</text>
<rect x="764" y="610" width="1" height="11" fill="#000"/>
<text transform="translate(766,619) scale(0.93,1)" font-size="9.7" fill="#000">21</text>
<rect x="811" y="610" width="1" height="11" fill="#000"/>
<text transform="translate(813,619) scale(0.93,1)" font-size="9.7" fill="#000">28</text>
<rect x="840" y="610" width="1" height="11" fill="#000"/>
<rect x="859" y="610" width="1" height="11" fill="#000"/>
<text transform="translate(861,619) scale(0.93,1)" font-size="9.7" fill="#000">5</text>
<rect x="906" y="610" width="1" height="11" fill="#000"/>
<text transform="translate(908,619) scale(0.93,1)" font-size="9.7" fill="#000">12</text>
<rect x="954" y="610" width="1" height="11" fill="#000"/>
<text transform="translate(956,619) scale(0.93,1)" font-size="9.7" fill="#000">19</text>
<rect x="1001" y="610" width="1" height="11" fill="#000"/>
<text transform="translate(1003,619) scale(0.93,1)" font-size="9.7" fill="#000">26</text>
<rect x="1049" y="610" width="1" height="11" fill="#000"/>
<text transform="translate(1051,619) scale(0.93,1)" font-size="9.7" fill="#000">2</text>
<rect x="1096" y="610" width="1" height="11" fill="#000"/>
<text transform="translate(1098,619) scale(0.93,1)" font-size="9.7" fill="#000">9</text>
<rect x="1144" y="610" width="1" height="11" fill="#000"/>
<text transform="translate(1146,619) scale(0.93,1)" font-size="9.7" fill="#000">16</text>
<rect x="1191" y="610" width="1" height="11" fill="#000"/>
<text transform="translate(1193,619) scale(0.93,1)" font-size="9.7" fill="#000">23</text>
<rect x="61" y="610" width="1" height="22" fill="#000"/>
<text transform="translate(63,631) scale(0.93,1)" font-size="9.7" fill="#000">2014</text>
<rect x="260" y="610" width="1" height="22" fill="#000"/>
<text transform="translate(262,631) scale(0.93,1)" font-size="9.7" fill="#000">February</text>
<rect x="441" y="610" width="1" height="22" fill="#000"/>
<text transform="translate(443,631) scale(0.93,1)" font-size="9.7" fill="#000">March</text>
<rect x="640" y="610" width="1" height="22" fill="#000"/>
<text transform="translate(642,631) scale(0.93,1)" font-size="9.7" fill="#000">April</text>
<rect x="840" y="610" width="1" height="22" fill="#000"/>
<text transform="translate(842,631) scale(0.93,1)" font-size="9.7" fill="#000">May</text>
<rect x="1049" y="610" width="1" height="22" fill="#000"/>
<text transform="translate(1051,631) scale(0.93,1)" font-size="9.7" fill="#000">June</text>
</svg></body></html>
